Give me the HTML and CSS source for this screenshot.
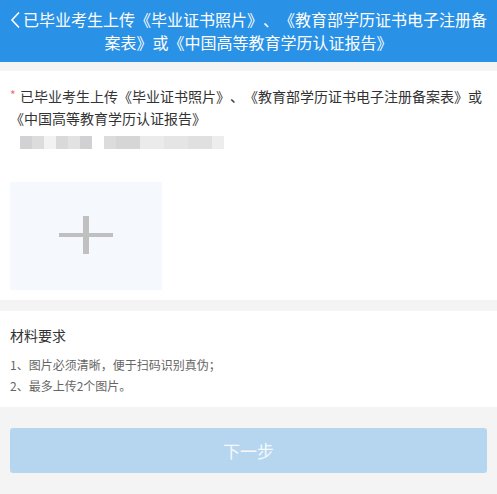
FILE: index.html
```html
<!DOCTYPE html>
<html lang="zh">
<head>
<meta charset="utf-8">
<link rel="stylesheet" href="styles.css">
</head>
<body>
<header class="header">
  <h1 class="title"><svg class="back" width="12" height="18" viewBox="0 0 12 18"><path d="M9 1.5 L2 9 L9 16.5" fill="none" stroke="#fff" stroke-width="1.6"/></svg>已毕业考生上传《毕业证书照片》、《教育部学历证书电子注册备案表》或《中国高等教育学历认证报告》</h1>
</header>
<section class="card upload-card">
  <p class="label required">已毕业考生上传《毕业证书照片》、《教育部学历证书电子注册备案表》或《中国高等教育学历认证报告》</p>
  <div class="blurred">
    <div class="blur-group">
      <span class="b" style="background:#d2d2d4"></span><span class="b" style="background:#dcdcdd"></span><span class="b" style="background:#f2f2f2"></span><span class="b" style="background:#d9d9da"></span><span class="b" style="background:#e2e2e3"></span><span class="b" style="background:#d1d1d3"></span>
    </div>
    <div class="blur-group">
      <span class="b" style="background:#dcdcdd"></span><span class="b wide" style="background:#d6d6d7"></span><span class="b wide" style="background:#ebebeb"></span><span class="b wide" style="background:#e5e5e6"></span><span class="b wide" style="background:#e0e0e1"></span><span class="b" style="background:#ededee"></span>
    </div>
  </div>
  <div class="upload">
    <span class="plus"></span>
  </div>
</section>
<section class="card req-card">
  <h2 class="req-title">材料要求</h2>
  <ol class="req-list">
    <li>1、图片必须清晰，便于扫码识别真伪；</li>
    <li>2、最多上传2个图片。</li>
  </ol>
</section>
<div class="footer">
  <button class="next" type="button">下一步</button>
</div>
</body>
</html>
```
FILE: styles.css
```css
* { box-sizing: border-box; }
html, body {
  margin: 0;
  padding: 0;
  background: #f4f4f4;
  font-family: "Noto Sans CJK SC", "Noto Sans", sans-serif;
  text-spacing-trim: space-all;
}
.header {
  background: #2a92e6;
  padding: 8px 6px;
  height: 62px;
}
.title {
  margin: 0;
  color: #fff;
  font-size: 16px;
  font-weight: normal;
  line-height: 23px;
  text-align: center;
}
.back {
  display: inline-block;
  vertical-align: -3px;
  margin-right: 1px;
}
.card {
  background: #fff;
}
.upload-card {
  margin-top: 9px;
  padding: 14px 10px 10px;
}
.label {
  margin: 0;
  font-size: 14px;
  line-height: 22px;
  color: #333;
}
.required::before {
  content: "*";
  display: inline-block;
  width: 10px;
  color: #f26d6d;
  font-size: 12px;
  line-height: 14px;
  vertical-align: 2px;
}
.blurred {
  display: flex;
  gap: 12px;
  padding: 7px 0 0 10px;
  height: 53px;
}
.blur-group {
  display: flex;
  height: 13px;
  filter: blur(0.6px);
}
.b {
  display: block;
  width: 12px;
  height: 13px;
}
.b.wide { width: 24px; }
.upload {
  width: 152px;
  height: 108px;
  background: #f5f9fd;
  position: relative;
}
.plus {
  position: absolute;
  left: 49px;
  top: 34px;
  width: 54px;
  height: 38px;
}
.plus::before, .plus::after {
  content: "";
  position: absolute;
  background: #c0c0c0;
}
.plus::before {
  left: 0;
  top: 17px;
  width: 54px;
  height: 4px;
}
.plus::after {
  left: 24px;
  top: 0;
  width: 6px;
  height: 38px;
}
.req-card {
  margin-top: 11px;
  padding: 13px 10px 11px;
}
.req-title {
  margin: 0 0 8px;
  font-size: 14px;
  font-weight: normal;
  line-height: 22px;
  color: #333;
}
.req-list {
  list-style: none;
  margin: 0;
  padding: 0;
  font-size: 12px;
  line-height: 21px;
  color: #666;
}
.footer {
  padding: 21px 10px;
}
.next {
  display: block;
  width: 100%;
  height: 45px;
  border: 0;
  border-radius: 3px;
  background: #b6d6ef;
  color: #f5f9fc;
  font-family: "Noto Sans CJK SC", sans-serif;
  font-size: 17px;
}
```
